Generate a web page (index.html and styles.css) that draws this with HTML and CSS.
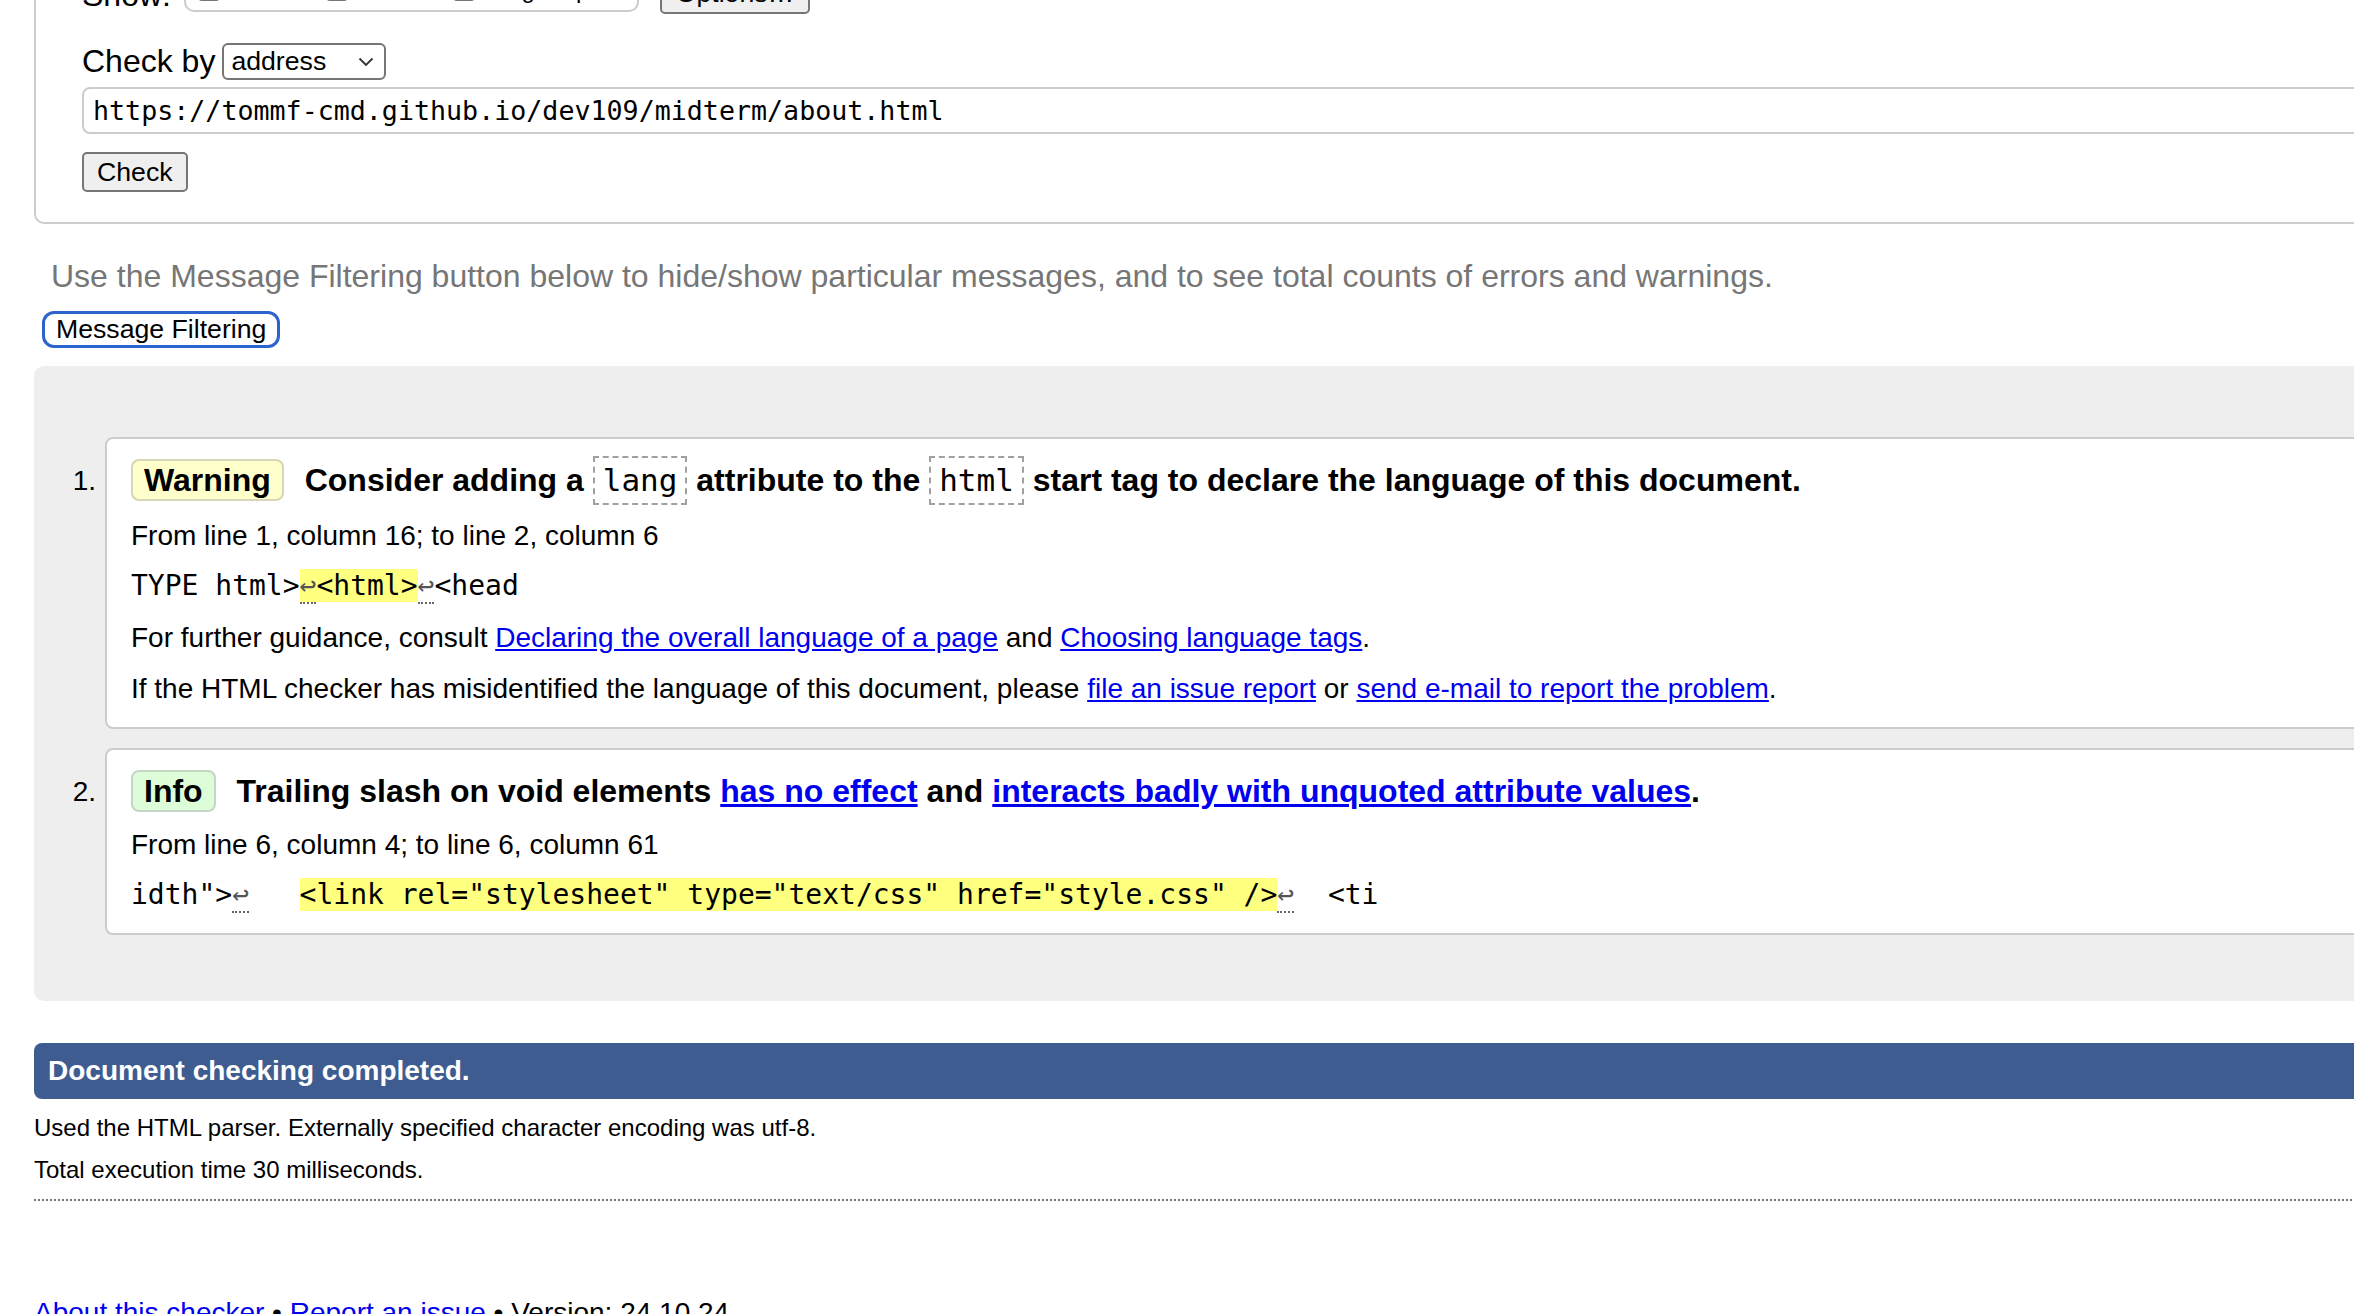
FILE: index.html
```html
<!DOCTYPE html>
<html lang="en">
<head>
<meta charset="utf-8">
<title>Nu Html Checker</title>
<link rel="stylesheet" href="styles.css">
</head>
<body>
<div class="page">
  <form class="frame">
    <div class="show-row">
      <span class="lbl">Show:</span>
      <span class="opts">
        <span class="opt"><span class="cb"></span>source</span>
        <span class="opt"><span class="cb"></span>outline</span>
        <span class="opt"><span class="cb"></span>image report</span>
      </span>
      <button type="button" class="btn opt-btn">Options…</button>
    </div>
    <div class="by-row">
      <span class="lbl">Check by</span>
      <span class="select">address<svg class="chev" width="16" height="10" viewBox="0 0 16 10"><polyline points="1.5,1.5 8,8 14.5,1.5" fill="none" stroke="#333" stroke-width="1.8"/></svg></span>
    </div>
    <div class="url">https://tommf-cmd.github.io/dev109/midterm/about.html</div>
    <button type="button" class="btn check">Check</button>
  </form>

  <p class="hint">Use the Message Filtering button below to hide/show particular messages, and to see total counts of errors and warnings.</p>
  <button type="button" class="filter-btn">Message Filtering</button>

  <div class="results">
    <ol class="msgs">
      <li class="item">
        <span class="num">1.</span>
        <div class="msg">
          <p class="title"><strong class="badge warn">Warning</strong> Consider adding a <code class="tc">lang</code> attribute to the <code class="tc">html</code> start tag to declare the language of this document.</p>
          <p class="loc">From line 1, column 16; to line 2, column 6</p>
          <p class="extract">TYPE html&gt;<mark><b class="lf"><i>↩</i></b>&lt;html&gt;</mark><b class="lf"><i>↩</i></b>&lt;head</p>
          <p class="txt t3">For further guidance, consult <a href="#">Declaring the overall language of a page</a> and <a href="#">Choosing language tags</a>.</p>
          <p class="txt t4">If the HTML checker has misidentified the language of this document, please <a href="#">file an issue report</a> or <a href="#">send e-mail to report the problem</a>.</p>
        </div>
      </li>
      <li class="item">
        <span class="num">2.</span>
        <div class="msg">
          <p class="title"><strong class="badge info">Info</strong> Trailing slash on void elements <a href="#">has no effect</a> and <a href="#">interacts badly with unquoted attribute values</a>.</p>
          <p class="loc loc2">From line 6, column 4; to line 6, column 61</p>
          <p class="extract">idth"&gt;<b class="lf"><i>↩</i></b>   <mark>&lt;link rel="stylesheet" type="text/css" href="style.css" /&gt;</mark><b class="lf"><i>↩</i></b>  &lt;ti</p>
        </div>
      </li>
    </ol>
  </div>

  <p class="done">Document checking completed.</p>
  <div class="details">
    <p class="d1">Used the HTML parser. Externally specified character encoding was utf-8.</p>
    <p class="d2">Total execution time 30 milliseconds.</p>
  </div>
  <hr class="sep">
  <p class="foot"><a href="#">About this checker</a> • <a href="#">Report an issue</a> • Version: 24.10.24</p>
</div>
</body>
</html>
```

FILE: styles.css
```css
html, body {
  margin: 0;
  padding: 0;
  overflow: hidden;
  background: #fff;
}

body {
  font-family: "Liberation Sans", Arial, Helvetica, sans-serif;
  color: #000;
}

a {
  color: #0000ee;
  text-decoration: underline;
}

.page {
  width: 2700px;
  box-sizing: border-box;
  padding-left: 34px;
  margin-top: -60px;
}

/* ---------- form frame ---------- */
.frame {
  margin: 0;
  border: 2px solid #cccccc;
  border-radius: 10px;
  padding: 12px 0 30px 46px;
  display: flex;
  flex-direction: column;
  align-items: flex-start;
}

.lbl {
  font-size: 32px;
  line-height: 37px;
  white-space: nowrap;
}

.show-row {
  height: 60px;
  display: flex;
  align-items: flex-end;
}

.opts {
  margin-left: 13px;
  margin-bottom: 2px;
  width: 455px;
  height: 44px;
  box-sizing: border-box;
  border: 2px solid #cccccc;
  border-radius: 10px;
  display: flex;
  align-items: center;
  padding-left: 12px;
  gap: 26px;
  font-size: 24px;
  white-space: nowrap;
}

.opt {
  display: inline-flex;
  align-items: center;
  gap: 8px;
  white-space: nowrap;
}

.cb {
  width: 18px;
  height: 18px;
  border: 2px solid #767676;
  border-radius: 4px;
  background: #fff;
  flex: none;
}

.btn {
  font-family: "Liberation Sans", Arial, Helvetica, sans-serif;
  font-size: 26.67px;
  color: #000;
  background: #efefef;
  border: 2px solid #767676;
  border-radius: 5px;
  padding: 0 13px;
  height: 40px;
  box-sizing: border-box;
  line-height: 36px;
  white-space: nowrap;
}

.opt-btn {
  margin-left: 21px;
  width: 150px;
  height: 42px;
}

.by-row {
  margin-top: 29px;
  height: 37px;
  display: flex;
  align-items: center;
}

.select {
  margin-left: 7px;
  width: 164px;
  height: 37px;
  box-sizing: border-box;
  border: 2px solid #767676;
  border-radius: 6px;
  background: #fff;
  display: flex;
  align-items: center;
  justify-content: space-between;
  padding: 0 10px 0 7px;
  font-size: 26.67px;
}

.chev {
  display: block;
}

.url {
  margin-top: 7px;
  align-self: stretch;
  height: 47px;
  box-sizing: border-box;
  border: 2px solid #cccccc;
  border-radius: 8px;
  padding-left: 9px;
  font-family: "DejaVu Sans Mono", "Liberation Mono", monospace;
  font-size: 26.67px;
  line-height: 43px;
  white-space: nowrap;
}

.check {
  margin-top: 18px;
}

/* ---------- hint & filter ---------- */
.hint {
  margin: 34px 0 0;
  padding-left: 17px;
  font-size: 32px;
  line-height: 37px;
  color: #767676;
}

.filter-btn {
  display: block;
  margin: 16px 0 0 8px;
  height: 37px;
  box-sizing: border-box;
  border: 3px solid #2c63cc;
  border-radius: 12px;
  background: #fff;
  padding: 0 11px;
  font-family: "Liberation Sans", Arial, Helvetica, sans-serif;
  font-size: 26.67px;
  line-height: 31px;
  color: #000;
}

/* ---------- results ---------- */
.results {
  margin-top: 18px;
  background: #eeeeee;
  border-radius: 10px 0 0 10px;
  padding: 71px 0 66px 0;
}

.msgs {
  list-style: none;
  margin: 0;
  padding: 0;
  display: flex;
  flex-direction: column;
  gap: 19px;
}

.item {
  display: flex;
  align-items: flex-start;
}

.num {
  width: 62px;
  margin-right: 9px;
  padding-top: 26px;
  text-align: right;
  font-size: 28px;
  line-height: 36px;
  flex: none;
}

.msg {
  flex: 1;
  background: #fff;
  border: 2px solid #cccccc;
  border-radius: 8px;
  padding: 17px 0 20px 24px;
}

.msg p {
  margin: 0;
  white-space: nowrap;
}

.title {
  font-size: 32px;
  font-weight: bold;
  line-height: 49px;
  height: 49px;
}

.badge {
  display: inline-block;
  line-height: 38px;
  padding: 0 11px;
  border: 2px solid #cccccc;
  border-radius: 8px;
  margin-right: 12px;
}

.badge.warn {
  background: #ffffcc;
  border-color: #d6d6b8;
}

.badge.info {
  background: #dcfdd8;
  border-color: #c6d6c4;
}

.tc {
  display: inline-block;
  font-family: "DejaVu Sans Mono", "Liberation Mono", monospace;
  font-weight: normal;
  font-size: 31px;
  line-height: 45px;
  padding: 0 8px;
  border: 2px dashed #a0a0a0;
}

.loc {
  font-size: 28px;
  line-height: 36px;
}

.msg .loc {
  margin-top: 13px;
}

.msg .loc2 {
  margin-top: 11px;
}

.msg .extract {
  margin-top: 14px;
  font-family: "DejaVu Sans Mono", "Liberation Mono", monospace;
  font-size: 28px;
  line-height: 36px;
  white-space: pre;
}

.txt {
  font-size: 28px;
  line-height: 36px;
}

.msg .t3 {
  margin-top: 16px;
}

.msg .t4 {
  margin-top: 15px;
}

mark {
  background: #ffff80;
  color: inherit;
}

.lf {
  font-weight: normal;
  border-bottom: 2px dotted #666;
}

.lf i {
  display: inline-block;
  width: 16.86px;
  text-align: center;
  font-style: normal;
  font-size: 28px;
  color: #555;
}

/* ---------- completion ---------- */
.done {
  margin: 42px 0 0;
  height: 56px;
  line-height: 56px;
  padding-left: 14px;
  background: #3e5c8f;
  color: #fff;
  font-size: 28px;
  font-weight: bold;
  border-radius: 8px 0 0 8px;
}

.details p {
  margin: 0;
  font-size: 24px;
  line-height: 28px;
}

.details .d1 {
  margin-top: 15px;
}

.details .d2 {
  margin-top: 14px;
}

.sep {
  margin: 15px 0 0;
  border: 0;
  border-top: 2px dotted #777;
  height: 0;
}

.foot {
  margin: 96px 0 0;
  font-size: 28px;
  line-height: 32px;
}
```
